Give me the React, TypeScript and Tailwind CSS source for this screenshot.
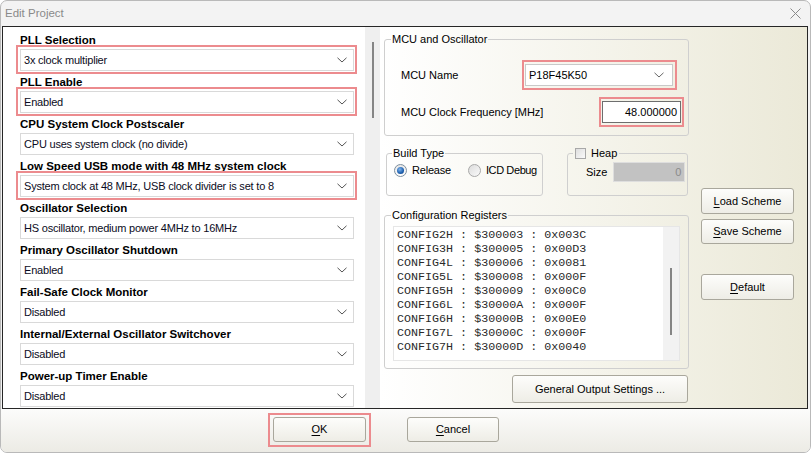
import React from "react";

const Chevron = ({ color = "#555" }: { color?: string }) => (
  <svg width="10" height="6" viewBox="0 0 10 6" className="shrink-0">
    <path d="M0.5 0.8 L5 5 L9.5 0.8" fill="none" stroke={color} strokeWidth="1" />
  </svg>
);

const Highlight = ({ cls }: { cls: string }) => (
  <span className={"pointer-events-none absolute border-2 border-[#ec8b8e] " + cls} />
);

function LeftSelect({ value, hl }: { value: string; hl?: boolean }) {
  return (
    <div className="relative ml-[17px] w-[334px] h-[22px]">
      <div className="w-full h-full border border-[#d9d9d9] bg-white flex items-center justify-between pl-[3px] pr-[6px] text-[11px] tracking-[-0.2px] text-[#0b0b22]">
        <span>{value}</span>
        <Chevron />
      </div>
      {hl && <Highlight cls="-top-[4px] -left-[4px] -right-[3px] -bottom-[3px]" />}
    </div>
  );
}

function Section({ label, value, hl }: { label: string; value: string; hl?: boolean }) {
  return (
    <div className="flex flex-col">
      <div className="h-[17px] pl-[17px] flex items-center text-[11.5px] font-bold text-black">{label}</div>
      <LeftSelect value={value} hl={hl} />
      <div className="h-[3px]" />
    </div>
  );
}

function WinButton({ children, cls }: { children: React.ReactNode; cls: string }) {
  return (
    <div
      className={
        "flex items-center justify-center rounded-[3px] border border-[#a9a79c] bg-gradient-to-b from-[#fdfdfb] to-[#eeede6] text-[11px] text-black whitespace-nowrap " +
        cls
      }
    >
      {children}
    </div>
  );
}

const U = ({ c }: { c: string }) => <span className="underline underline-offset-[2px]">{c}</span>;

const registers = [
  "CONFIG2H : $300003 : 0x003C",
  "CONFIG3H : $300005 : 0x00D3",
  "CONFIG4L : $300006 : 0x0081",
  "CONFIG5L : $300008 : 0x000F",
  "CONFIG5H : $300009 : 0x00C0",
  "CONFIG6L : $30000A : 0x000F",
  "CONFIG6H : $30000B : 0x00E0",
  "CONFIG7L : $30000C : 0x000F",
  "CONFIG7H : $30000D : 0x0040",
];

export default function App() {
  return (
    <div className="w-[811px] h-[453px] bg-white font-['Liberation_Sans',Arial,sans-serif]">
      <div className="w-full h-full flex flex-col rounded-[7px] border border-[#b9b9b9] overflow-hidden bg-[#f3f3f3]">
        {/* Title bar */}
        <div className="h-[25px] shrink-0 flex items-center justify-between pl-[4px] pr-[8px]">
          <span className="text-[11.5px] text-[#8a8a8a]">Edit Project</span>
          <svg width="11" height="11" viewBox="0 0 11 11" className="mr-[1px]">
            <path d="M0.5 0.5 L10.5 10.5 M10.5 0.5 L0.5 10.5" stroke="#8a8a8a" strokeWidth="1" />
          </svg>
        </div>

        {/* Main area */}
        <div className="h-[383px] shrink-0 ml-[1px] mr-[2px] border border-[#262626] flex overflow-hidden">
          {/* Left scroll panel */}
          <div className="w-[362px] shrink-0 bg-white pt-[5px] overflow-hidden">
            <Section label="PLL Selection" value="3x clock multiplier" hl />
            <Section label="PLL Enable" value="Enabled" hl />
            <Section label="CPU System Clock Postscaler" value="CPU uses system clock (no divide)" />
            <Section label="Low Speed USB mode with 48 MHz system clock" value="System clock at 48 MHz, USB clock divider is set to 8" hl />
            <Section label="Oscillator Selection" value="HS oscillator, medium power 4MHz to 16MHz" />
            <Section label="Primary Oscillator Shutdown" value="Enabled" />
            <Section label="Fail-Safe Clock Monitor" value="Disabled" />
            <Section label="Internal/External Oscillator Switchover" value="Disabled" />
            <Section label="Power-up Timer Enable" value="Disabled" />
          </div>
          {/* Scrollbar strip */}
          <div className="w-[15px] shrink-0 bg-[#efefef] pt-[15px] pl-[7px]">
            <div className="w-[2px] h-[76px] bg-[#858585]" />
          </div>

          {/* Right area */}
          <div className="flex-1 flex pl-[4px] bg-gradient-to-r from-white to-[#ebe9d8] text-[11px] text-black">
            <div className="w-[305px] shrink-0 flex flex-col">
              {/* MCU and Oscillator */}
              <fieldset className="mt-[5px] h-[104px] border border-[#cfcfcf] rounded-[3px]">
                <legend className="ml-[6px] px-[1px] leading-[14px]">MCU and Oscillator</legend>
                <div className="flex items-center h-[22px] mt-[18px]">
                  <div className="w-[140px] pl-[16px]">MCU Name</div>
                  <div className="relative w-[148px] h-[22px]">
                    <div className="w-full h-full border border-[#c9c9c9] bg-white flex items-center justify-between pl-[3px] pr-[8px]">
                      <span>P18F45K50</span>
                      <Chevron color="#666" />
                    </div>
                    <Highlight cls="-top-[4px] -left-[3px] -right-[4px] -bottom-[4px]" />
                  </div>
                </div>
                <div className="flex items-center h-[22px] mt-[15px]">
                  <div className="w-[217px] pl-[16px]">MCU Clock Frequency [MHz]</div>
                  <div className="relative w-[79px] h-[22px]">
                    <div className="w-full h-full border border-[#6e6e6e] bg-white flex items-center justify-end pr-[3px]">
                      48.000000
                    </div>
                    <Highlight cls="-top-[4px] -left-[3px] -right-[3px] -bottom-[4px]" />
                  </div>
                </div>
              </fieldset>

              {/* Build type + heap */}
              <div className="flex mt-[10px] h-[50px]">
                <fieldset className="ml-[2px] w-[157px] h-[50px] border border-[#cfcfcf] rounded-[3px]">
                  <legend className="ml-[5px] px-[1px] leading-[14px]">Build Type</legend>
                  <div className="flex items-center mt-[2px] pl-[7px] whitespace-nowrap">
                    <div className="shrink-0 w-[13px] h-[13px] rounded-full border border-[#7d8f9f] bg-gradient-to-b from-[#e6e6e6] to-white flex items-center justify-center">
                      <div className="w-[7px] h-[7px] rounded-full bg-[radial-gradient(circle_at_40%_35%,#7fb4ec,#1d5fae_60%,#0d3a78)]" />
                    </div>
                    <span className="ml-[5px] tracking-[-0.2px]">Release</span>
                    <div className="shrink-0 ml-[17px] w-[13px] h-[13px] rounded-full border border-[#a8a8a8] bg-gradient-to-br from-[#dcdcdc] to-[#fafafa]" />
                    <span className="ml-[5px] tracking-[-0.4px]">ICD Debug</span>
                  </div>
                </fieldset>
                <fieldset className="ml-[24px] w-[121px] h-[50px] border border-[#cfcfcf] rounded-[3px]">
                  <legend className="ml-[5px] px-[2px] leading-[14px]">
                    <span className="flex items-center">
                      <span className="w-[11px] h-[11px] border border-[#a8a8a8] bg-gradient-to-br from-[#dedede] to-[#fafafa]" />
                      <span className="ml-[5px]">Heap</span>
                    </span>
                  </legend>
                  <div className="flex items-center mt-[2px] pl-[18px]">
                    <span>Size</span>
                    <div className="ml-[6px] w-[72px] h-[20px] border border-[#dedede] bg-[#c2c2c2] flex items-center justify-end pr-[3px] text-[#8b8b8b]">
                      0
                    </div>
                  </div>
                </fieldset>
              </div>

              {/* Configuration registers */}
              <fieldset className="mt-[12px] h-[161px] border border-[#cfcfcf] rounded-[3px]">
                <legend className="ml-[6px] px-[1px] leading-[14px]">Configuration Registers</legend>
                <div className="ml-[8px] mt-[4px] w-[287px] h-[135px] border border-[#e6e6e6] bg-white flex">
                  <div className="flex-1 pl-[3px] pt-[1px] font-['Liberation_Mono','Courier_New',monospace] text-[11.7px] leading-[14px] text-[#2a2a2a] whitespace-pre">
                    {registers.map((r) => (
                      <div key={r}>{r}</div>
                    ))}
                  </div>
                  <div className="w-[16px] bg-[#f2f2f2] pt-[41px] pl-[7px]">
                    <div className="w-[2px] h-[67px] bg-[#858585]" />
                  </div>
                </div>
              </fieldset>

              <div className="flex justify-end mt-[6px] pr-[1px]">
                <WinButton cls="w-[176px] h-[28px]">General Output Settings ...</WinButton>
              </div>
            </div>

            {/* Scheme buttons */}
            <div className="ml-[12px] w-[93px] flex flex-col">
              <WinButton cls="mt-[161px] h-[26px]">
                <U c="L" />oad Scheme
              </WinButton>
              <WinButton cls="mt-[5px] h-[25px]">
                <U c="S" />ave Scheme
              </WinButton>
              <WinButton cls="mt-[30px] h-[26px]">
                <U c="D" />efault
              </WinButton>
            </div>
          </div>
        </div>

        {/* Footer */}
        <div className="flex-1 flex items-start pt-[8px] pl-[272px] bg-gradient-to-b from-[#fcfcfb] to-[#ecebe5]">
          <div className="relative">
            <WinButton cls="w-[93px] h-[25px]">
              <U c="O" />K
            </WinButton>
            <Highlight cls="-top-[4px] -left-[5px] -right-[5px] -bottom-[5px]" />
          </div>
          <WinButton cls="ml-[41px] w-[92px] h-[25px]">
            <U c="C" />ancel
          </WinButton>
        </div>
      </div>
    </div>
  );
}
